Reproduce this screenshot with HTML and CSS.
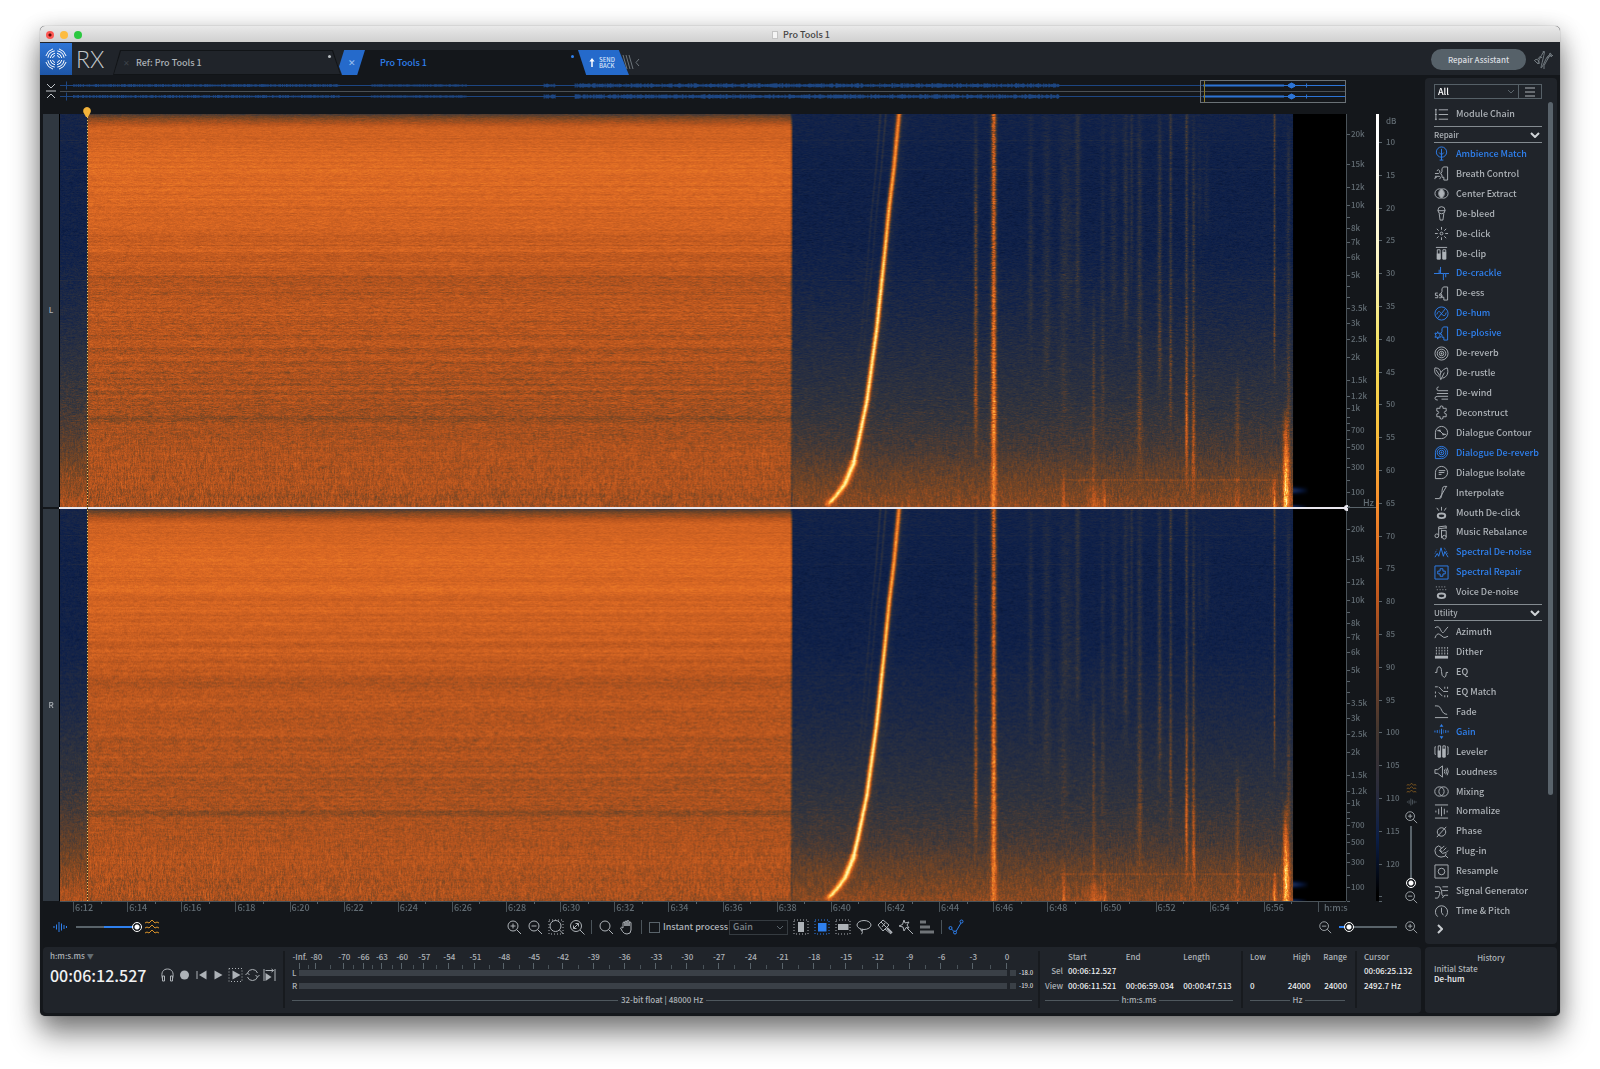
FILE: index.html
```html
<!DOCTYPE html>
<html lang="en">
<head>
<meta charset="utf-8">
<meta name="viewport" content="width=device-width, initial-scale=1">
<title>Pro Tools 1</title>
<link rel="stylesheet" href="styles.css">
</head>
<body>
<svg class="sprite" aria-hidden="true">
  <symbol id="zoom" viewBox="0 0 16 16"><circle cx="7" cy="7" r="5"/><path d="M10.600 10.600L15 15"/></symbol>
  <symbol id="zoom-in" viewBox="0 0 16 16"><circle cx="7" cy="7" r="5"/><path d="M10.600 10.600L15 15M4.500 7h5M7 4.500v5"/></symbol>
  <symbol id="zoom-out" viewBox="0 0 16 16"><circle cx="7" cy="7" r="5"/><path d="M10.600 10.600L15 15M4.500 7h5"/></symbol>
  <symbol id="wave" viewBox="0 0 16 16"><path d="M2 7v2M4.500 5.500v5M7 3v10M9.500 4.500v7M12 6v4M14.500 7v2"/></symbol>
  <symbol id="spectral" viewBox="0 0 16 16"><path d="M1 4l2-1 2 1 3-3 3 3 2-1 2 1M1 9l2-1 2 1 3-3 3 3 2-1 2 1M1 14l2-1 2 1 3-3 3 3 2-1 2 1"/></symbol>
  <symbol id="mouth" viewBox="0 0 16 16"><ellipse cx="8" cy="11.500" rx="4" ry="2.500" stroke-width="2"/></symbol>
  <symbol id="face" viewBox="0 0 16 16"><path d="M14.500 1H10L8.500 3v3L7 8.500l1.500 1V12h2v3h4z"/></symbol>
  <symbol id="bubble" viewBox="0 0 16 16"><path d="M1.500 14.500V8a6.500 6.500 0 1 1 6.500 6.500z"/></symbol>
</svg>

<main class="window">
  <header class="titlebar">
    <div class="lights"><i class="close"></i><i class="min"></i><i class="max"></i></div>
    <span class="doc"></span><span>Pro Tools 1</span>
  </header>

  <nav class="tabs">
    <span class="logo"><svg viewBox="0 0 32 32"><g id="q"><path d="M15 12.500A3.600 3.600 0 0 0 12.500 15M15 10.200A5.900 5.900 0 0 0 10.200 15M14.700 7.900A8.200 8.200 0 0 0 7.900 14.700M13 5.900A10.500 10.500 0 0 0 5.900 13"/></g><use href="#q" transform="matrix(-1 0 0 1 32 0)"/><use href="#q" transform="matrix(1 0 0 -1 0 32)"/><use href="#q" transform="rotate(180 16 16)"/></svg></span>
    <span class="product">RX</span>
    <a class="tab" href="#"><i>✕</i><span>Ref: Pro Tools 1</span><b></b></a>
    <button class="tab-close" aria-label="Close tab">✕</button>
    <a class="tab active" href="#"><span>Pro Tools 1</span><b></b></a>
    <button class="send"><svg viewBox="0 0 8 12"><path d="M4 0l3.500 4.500H5V12H3V4.500H.5z"/></svg><span>SEND<br>BACK</span></button>
    <svg class="grip" viewBox="0 0 18 16"><path d="M1 1l4 14M4 1l4 14M7 1l4 14M17 5l-3 3.500 3 3.500"/></svg>
    <button class="assistant">Repair Assistant</button>
    <svg class="izotope" viewBox="0 0 20 20"><path d="M1 11q2-3 4-1t1 4q-2 0 0-4t5-9q1 0-1 8t-2 9q1 0 4-7t6-6q-2 3-4 3M11 19q-1-3 2-7t4-9q2 0 1 4l2-2M5 9q2-4 4-1M10 1l1 2M2 11l3 3"/></svg>
  </nav>

  <div class="workspace">
    <section class="editor" aria-label="Spectrogram editor">
      <div class="overview">
        <svg class="collapse" viewBox="0 0 12 18"><path d="M2 2l4 4 4-4M1 9h10M2 16l4-4 4 4"/></svg>
        <div class="over-wave"><canvas id="overview" width="1287" height="26"></canvas><div class="viewbox"></div></div>
      </div>

      <div class="stage">
        <div class="chan">L</div>
        <canvas class="spec" width="1287" height="393"></canvas>
        <ul class="freq"></ul>
        <div class="chan second">R</div>
        <canvas class="spec second" width="1287" height="393"></canvas>
        <ul class="freq second"></ul>
        <div class="split"><i></i></div>
        <span class="hz">Hz</span>
        <div class="playhead"><svg viewBox="0 0 8 10"><path d="M4 0a4 4 0 0 1 3.500 5.500L5 10H3L.5 5.500A4 4 0 0 1 4 0z"/></svg></div>
        <div class="colorbar"></div>
        <ul class="db"></ul>
        <div class="vzoom">
          <svg class="mini gold"><use href="#spectral"/></svg>
          <svg class="mini dim"><use href="#wave"/></svg>
          <svg class="ic"><use href="#zoom-in"/></svg>
          <input type="range" class="vertical" aria-label="Vertical zoom" value="0">
          <svg class="ic"><use href="#zoom-out"/></svg>
        </div>
      </div>

      <ol class="ruler"></ol>

      <div class="toolbar">
        <div class="group">
          <svg class="ic blue"><use href="#wave"/></svg>
          <input type="range" class="blend" aria-label="Waveform and spectrogram blend" value="100">
          <svg class="ic gold bright"><use href="#spectral"/></svg>
        </div>
        <div class="group tools">
          <button aria-label="Zoom in"><svg class="ic"><use href="#zoom-in"/></svg></button>
          <button aria-label="Zoom out"><svg class="ic"><use href="#zoom-out"/></svg></button>
          <button aria-label="Zoom to selection"><svg class="ic" viewBox="0 0 16 16"><rect x="1" y="1" width="14" height="14" stroke-dasharray="1 2"/><circle cx="7.500" cy="7" r="5.500"/><path d="M11.500 11l4 4"/></svg></button>
          <button aria-label="Zoom out full"><svg class="ic" viewBox="0 0 16 16"><circle cx="7" cy="7" r="5.500"/><path d="M11 11l4.500 4.500M4.500 9.500l5-5M6.500 4.500h3v3M4.500 6.500v3h3"/></svg></button>
          <hr>
          <button aria-label="Zoom"><svg class="ic"><use href="#zoom"/></svg></button>
          <button aria-label="Grab"><svg class="ic" viewBox="0 0 16 16"><path d="M4 9V3.500q1-1 2 0V7 2.500q1-1 2 0V7 2q1-1 2 0v5-3.500q1-1 2 0V11q0 4-4 4-3 0-4.500-2.500L1.500 9q.5-1.500 2.500 0z"/></svg></button>
          <hr>
          <label class="instant"><input type="checkbox">Instant process</label>
          <select aria-label="Instant process module"><option>Gain</option></select>
          <button aria-label="Time selection"><svg class="ic" viewBox="0 0 16 16"><rect x="1" y="1" width="14" height="14" stroke-dasharray="1 2"/><path class="solid" d="M5 3h6v10H5z"/></svg></button>
          <button aria-label="Time-frequency selection"><svg class="ic blue" viewBox="0 0 16 16"><rect x="1" y="1" width="14" height="14" stroke-dasharray="1 2"/><path class="solid" d="M4 4h8.500v8.500H4z"/></svg></button>
          <button aria-label="Frequency selection"><svg class="ic" viewBox="0 0 16 16"><rect x="1" y="1" width="14" height="14" stroke-dasharray="1 2"/><path class="solid" d="M3 5h10.500v6H3z"/></svg></button>
          <button aria-label="Lasso"><svg class="ic" viewBox="0 0 16 16"><ellipse cx="8" cy="6" rx="7" ry="4.500"/><path d="M5 10c-1 2 1 2 2 1s-2-1-1 1 0 3-1 3"/></svg></button>
          <button aria-label="Brush"><svg class="ic" viewBox="0 0 16 16"><path d="M1 6l5-5 6 5-6 6zM4 3l6 6M6 12l2-2 6 5M8 4l-3 4"/><path d="M10 9l5 5" stroke-width="2"/></svg></button>
          <button aria-label="Magic wand"><svg class="ic" viewBox="0 0 16 16"><path d="M6 1l1 3 4-1-2 3 2 3-3-.5L6 12l-1-4-4-1 3.500-1.500zM9 9l6 6"/></svg></button>
          <button aria-label="Find similar"><svg class="ic" viewBox="0 0 16 16"><path d="M1 3h6M1 8h10M1 13h14" stroke-width="3" opacity=".6"/></svg></button>
          <hr>
          <button aria-label="Clip gain"><svg class="ic blue" viewBox="0 0 16 16"><circle cx="2.500" cy="9" r="1.500"/><circle cx="7" cy="13.500" r="1.500"/><circle cx="13.500" cy="2.500" r="1.500"/><path d="M3.500 10l2.500 2.500M8 12.500l5-8.500"/></svg></button>
        </div>
        <div class="group end">
          <svg class="ic"><use href="#zoom-out"/></svg>
          <input type="range" class="hzoom" aria-label="Horizontal zoom" value="10">
          <svg class="ic"><use href="#zoom-in"/></svg>
        </div>
      </div>
    </section>

    <aside class="panel modules">
      <div class="filter">
        <select aria-label="Module filter"><option>All</option></select>
        <button aria-label="Module menu"><svg viewBox="0 0 12 10"><path d="M1 1h10M1 5h10M1 9h10"/></svg></button>
      </div>
      <button class="mod chain"><svg viewBox="0 0 16 16"><path d="M5 3h10M5 8h10M5 13h10M2 2v12M1 3h2M1 8h2M1 13h2"/></svg>Module Chain</button>
      <h2>Repair<svg viewBox="0 0 10 6"><path d="M1 1l4 4 4-4"/></svg></h2>
      <div class="list repair">
        <button class="mod on"><svg viewBox="0 0 16 16"><circle cx="8" cy="6.500" r="5.500"/><path d="M8 3v12M5.500 7L8 9.500 10.500 7M6 15h4"/></svg>Ambience Match</button>
        <button class="mod"><svg viewBox="0 0 16 16"><use href="#face"/><path d="M1 8h4q2-1 1-3T3 5M1 11h5q2 1 0 3M1 14q-1-2 2-2"/></svg>Breath Control</button>
        <button class="mod"><svg viewBox="0 0 16 16"><circle cx="6" cy="8" r="5"/><circle cx="10" cy="8" r="5"/><path class="solid" d="M8 3.500a5 5 0 0 1 0 9 5 5 0 0 1 0-9"/></svg>Center Extract</button>
        <button class="mod"><svg viewBox="0 0 16 16"><circle cx="8" cy="4.500" r="3.800"/><path d="M4 5h8M5.500 8l1 7h3l1-7"/></svg>De-bleed</button>
        <button class="mod"><svg viewBox="0 0 16 16"><circle cx="8" cy="8" r="1.500"/><path d="M8 1v3M8 12v3M1 8h3M12 8h3M3 3l2 2M11 11l2 2M13 3l-2 2M5 11l-2 2"/></svg>De-click</button>
        <button class="mod"><svg viewBox="0 0 16 16"><path d="M2 1.500h12M3.500 4h3v10h-3zM9.500 4h3v10h-3z"/><path class="solid" d="M3 8h4v6H3zM9 6h4v8H9z"/></svg>De-clip</button>
        <button class="mod on"><svg viewBox="0 0 16 16"><path d="M0 8h5.500V4M5.500 8h1.500V1M7 8h3v7M10 8h2.500v4M12.500 8H16"/></svg>De-crackle</button>
        <button class="mod"><svg viewBox="0 0 16 16"><use href="#face"/><path d="M4 7.500H1.500V10H4v2.500H1M8 8.500H6v2h2v2H5.500"/></svg>De-ess</button>
        <button class="mod on"><svg viewBox="0 0 16 16"><circle cx="8" cy="8" r="7"/><path d="M4 13L12 3M3 9q1.500-5 4-2l2 2.500Q12 12 13 7"/></svg>De-hum</button>
        <button class="mod on"><svg viewBox="0 0 16 16"><use href="#face"/><path d="M4 6l.7 2L7 7.500 6 10l1 2-2.300-.3L4 14l-.7-2.300L1 12l1-2-1-2.500 2.300.5z"/></svg>De-plosive</button>
        <button class="mod"><svg viewBox="0 0 16 16"><circle cx="8" cy="8" r="7"/><circle cx="8" cy="8" r="4.600"/><circle cx="8" cy="8" r="2.400"/><circle class="solid" cx="8" cy="8" r="1"/></svg>De-reverb</button>
        <button class="mod"><svg viewBox="0 0 16 16"><path d="M7 14C5 9 8 4 14 2c2 5 0 10-5 11M7 15l4-8M5 11C1 9 0 6 1 2c4 0 6 2 6 5M2 4l4 6"/></svg>De-rustle</button>
        <button class="mod"><svg viewBox="0 0 16 16"><path d="M15 5H5Q3 5 3 3t2-2M15 8H3M15 11H4q-3 0-3 2t3 2M15 14H8"/></svg>De-wind</button>
        <button class="mod"><svg viewBox="0 0 16 16"><path d="M3 3.500h3.500Q5.500 1 8 1t1.500 2.500H13V6.500q-2 0-2 1.500t2 1.500v3H9.500Q10.500 15 8 15t-1.500-2.500H3v-3Q5 9.500 5 8T3 6.500z"/></svg>Deconstruct</button>
        <button class="mod"><svg viewBox="0 0 16 16"><use href="#bubble"/><path d="M3.500 6h2.500l4 4h3"/><path class="solid" d="M5 5h2v2H5zM9 9h2v2H9z"/></svg>Dialogue Contour</button>
        <button class="mod on"><svg viewBox="0 0 16 16"><use href="#bubble"/><circle cx="8" cy="8" r="4.600"/><circle cx="8" cy="8" r="2.500"/><circle class="solid" cx="8" cy="8" r="1"/></svg>Dialogue De-reverb</button>
        <button class="mod"><svg viewBox="0 0 16 16"><use href="#bubble"/><path d="M5 6h7M5 8h6M5 10h3"/></svg>Dialogue Isolate</button>
        <button class="mod"><svg viewBox="0 0 16 16"><path d="M1 14.500h5c4 0 1-13 5-13h3M6 14L13 2"/></svg>Interpolate</button>
        <button class="mod"><svg viewBox="0 0 16 16"><use href="#mouth"/><path d="M3 3l2 3M8 2v4M13 3l-2 3"/></svg>Mouth De-click</button>
        <button class="mod"><svg viewBox="0 0 16 16"><circle cx="3" cy="11.500" r="2"/><path d="M5 11V2l8-1v3M5 4l8-1M8 5v9M8 6h5v7"/><circle cx="11" cy="13" r="2"/></svg>Music Rebalance</button>
        <button class="mod on"><svg viewBox="0 0 16 16"><path d="M1 13l2.500-4L5 12 7.500 3l2.500 9 1.500-5L15 13"/><path d="M1 9l2-4M11 3l4 7" stroke-dasharray="1 1"/></svg>Spectral De-noise</button>
        <button class="mod on"><svg viewBox="0 0 16 16"><path d="M1 1h14v14H1zM6.500 4h3v2.500H12v3H9.500V12h-3V9.500H4v-3h2.500z"/></svg>Spectral Repair</button>
        <button class="mod"><svg viewBox="0 0 16 16"><use href="#mouth"/><path d="M2 2h12M3 5h10" stroke-dasharray="1 2"/></svg>Voice De-noise</button>
      </div>
      <h2>Utility<svg viewBox="0 0 10 6"><path d="M1 1l4 4 4-4"/></svg></h2>
      <div class="list utility">
        <button class="mod"><svg viewBox="0 0 16 16"><path d="M1 3q4-3 6 2t4 2 4-5M1 14q2-6 5-4t4 3 5-1"/></svg>Azimuth</button>
        <button class="mod"><svg viewBox="0 0 16 16"><path d="M2 3h13M2 6h13M2 9h13" stroke-width="2" stroke-dasharray="1 2"/><path class="solid" d="M1 11.500h14v3H1z"/></svg>Dither</button>
        <button class="mod"><svg viewBox="0 0 16 16"><path d="M1 9h2q0-6 2.500-6T8 8t2.500 6T13 9h2"/></svg>EQ</button>
        <button class="mod"><svg viewBox="0 0 16 16"><path d="M1 3h3M5 3l5 5h5M5 9l4 4"/><path d="M1 9h3M11 13h4M11 4h4M1 13h3" stroke-width="2" stroke-dasharray="1 2"/></svg>EQ Match</button>
        <button class="mod"><svg viewBox="0 0 16 16"><path d="M1 2h2c6 0 4 9 11 9M1 14.500h14"/></svg>Fade</button>
        <button class="mod on"><svg viewBox="0 0 16 16"><path d="M1 7v2M3.500 6.500v3M8 5v6M12.500 6.500v3M15 7v2"/><path d="M6 6v4M10 6v4" opacity=".6"/><path class="solid" d="M8 0l2 3H6zM8 16l2-3H6z"/></svg>Gain</button>
        <button class="mod"><svg viewBox="0 0 16 16"><path d="M4.500 2h2.500v12H4.500zM9.500 2H12v12H9.500zM2 3H1v8h1M14 3h1v8h-1"/><path class="solid" d="M4 7h3v7H4zM9 5h3v9H9z"/></svg>Leveler</button>
        <button class="mod"><svg viewBox="0 0 16 16"><path d="M1 6h3l5-4v12l-5-4H1zM11 6q1 2 0 4M12.500 5q2 3 0 6M14 4q2.500 4 0 8"/></svg>Loudness</button>
        <button class="mod"><svg viewBox="0 0 16 16"><circle cx="5.800" cy="8" r="5"/><circle cx="10.200" cy="8" r="5"/></svg>Mixing</button>
        <button class="mod"><svg viewBox="0 0 16 16"><path d="M1 1h14M1 15h14M2 7v2M5 5v6M8 3v10M11 5v6M14 7v2"/></svg>Normalize</button>
        <button class="mod"><svg viewBox="0 0 16 16"><circle cx="8" cy="8.500" r="4.500"/><path d="M3 14L13 3"/></svg>Phase</button>
        <button class="mod"><svg viewBox="0 0 16 16"><path d="M8 4L5 2Q1 3 1 7t3 6 8 0l1-3M8 4L6 7l3 3 4-1 2-2M8 5l3-3M10 7l3-3M6 7l3 1M12 12l3 3"/></svg>Plug-in</button>
        <button class="mod"><svg viewBox="0 0 16 16"><path d="M1 1h14v14H1z"/><circle cx="8" cy="8" r="3.500"/></svg>Resample</button>
        <button class="mod"><svg viewBox="0 0 16 16"><path d="M1 3h4q2 0 2 2t2 2h6M1 8h4q2 0 1 3t-2 4H1M9 3h6M15 12h-3q-2 0-3 3M8 7q0 6 2 6"/></svg>Signal Generator</button>
        <button class="mod"><svg viewBox="0 0 16 16"><path d="M4 13.500a6.500 6.500 0 1 1 8 0M8 4v5l2 3"/></svg>Time &amp; Pitch</button>
      </div>
      <button class="more" aria-label="Show more"><svg viewBox="0 0 6 10"><path d="M1 1l4 4-4 4"/></svg></button>
      <i class="scroll"></i>
    </aside>

    <footer class="panel info">
      <section class="timer">
        <button class="format">h:m:s.ms <span>▼</span></button>
        <div class="clock-row">
          <strong>00:06:12.527</strong>
          <div class="transport">
            <button aria-label="Monitor"><svg viewBox="0 0 14 16"><path d="M2 12C0 5 3 2 7 2s7 3 5 10M2 9v5h2V9zM10 9v5h2V9z"/></svg></button>
            <button aria-label="Record"><svg viewBox="0 0 14 16"><circle class="solid" cx="7" cy="8" r="4.500"/></svg></button>
            <button aria-label="Rewind"><svg viewBox="0 0 14 16"><path d="M2.500 4v8"/><path class="solid" d="M12 3.500v9L4.500 8z"/></svg></button>
            <button aria-label="Play"><svg viewBox="0 0 14 16"><path class="solid" d="M3 3.500v9L11 8z"/></svg></button>
            <button aria-label="Play selection"><svg viewBox="0 0 14 16"><rect x=".5" y="1.500" width="13" height="13" stroke-dasharray="1 2"/><path class="solid" d="M4 3.500v9L12 8z"/></svg></button>
            <button aria-label="Loop"><svg viewBox="0 0 14 16"><path d="M2 6a5.300 5.300 0 0 1 10 0M12 10a5.300 5.300 0 0 1-10 0M0 8l2-2 2 2M10 8l2 2 2-2"/></svg></button>
            <button aria-label="Follow playhead"><svg viewBox="0 0 14 16"><path d="M1.500 2v12M12.500 2v12M3 3.500h8M9 2l2 1.500L9 5"/><path class="solid" d="M3 6v8l6-4z"/></svg></button>
          </div>
        </div>
      </section>
      <section class="meter">
        <ol class="scale"></ol>
        <div class="bar"><span>L</span><i></i><b></b><em>-18.0</em></div>
        <div class="bar"><span>R</span><i></i><b></b><em>-19.0</em></div>
        <p class="legend">32-bit float | 48000 Hz</p>
      </section>
      <section class="selection">
        <table>
          <thead><tr><td></td><th>Start</th><th>End</th><th>Length</th></tr></thead>
          <tbody>
            <tr><th>Sel</th><td>00:06:12.527</td><td></td><td></td></tr>
            <tr><th>View</th><td>00:06:11.521</td><td>00:06:59.034</td><td>00:00:47.513</td></tr>
          </tbody>
        </table>
        <p class="legend">h:m:s.ms</p>
      </section>
      <section class="range">
        <table>
          <thead><tr><th>Low</th><th>High</th><th>Range</th></tr></thead>
          <tbody><tr><td></td><td></td><td></td></tr><tr><td>0</td><td>24000</td><td>24000</td></tr></tbody>
        </table>
        <p class="legend">Hz</p>
      </section>
      <section class="cursor">
        <table>
          <thead><tr><th>Cursor</th></tr></thead>
          <tbody><tr><td>00:06:25.132</td></tr><tr><td>2492.7 Hz</td></tr></tbody>
        </table>
      </section>
    </footer>

    <section class="panel history">
      <h3>History</h3>
      <p>Initial State</p>
      <p class="current">De-hum</p>
    </section>
  </div>
</main>
<script src="app.js"></script>
</body>
</html>
```
FILE: styles.css
```css
* { box-sizing: border-box; }

:root {
  --bg: #14171b;
  --panel: #20242a;
  --line: #59636a;
  --dim: #626c73;
  --text: #adb2b7;
  --light: #eceeef;
  --blue: #2f80ee;
  --gold: #d8922a;
}

body {
  margin: 0;
  padding: 26px 40px 53px;
  min-height: 100vh;
  display: flex;
  background: #fff;
  color: var(--text);
  font: 500 9px/14px "Noto Sans CJK SC", "Noto Sans", sans-serif;
}

ul, ol, p, h2, h3 { margin: 0; padding: 0; list-style: none; font-size: 8px; font-weight: 500; }
button, select, input { font: inherit; color: inherit; margin: 0; }
button { padding: 0; border: 0; background: none; cursor: pointer; }
a { color: inherit; text-decoration: none; }
svg { display: block; fill: none; stroke: currentColor; stroke-width: 1; flex: none; }
.solid { fill: currentColor; stroke: none; }
.sprite { position: absolute; width: 0; height: 0; }
.ic { width: 16px; height: 16px; }
.blue { color: var(--blue); }
.gold { color: #a06c22; }
.gold.bright { color: var(--gold); }
.dim { color: var(--dim); }

.window {
  flex: 1;
  min-width: 0;
  display: flex;
  flex-direction: column;
  border-radius: 5px;
  background: var(--bg);
  box-shadow: 0 0 1px #0008, 0 18px 30px #0007, 0 4px 22px #0003;
}

/* title bar */
.titlebar {
  position: relative;
  height: 16px;
  display: flex;
  align-items: center;
  justify-content: center;
  gap: 5px;
  padding: 2px 0 0 2px;
  border-radius: 5px 5px 0 0;
  background: linear-gradient(#e9e9e9, #d0d0d0);
  color: #444;
}
.doc { width: 6px; height: 8px; background: #f5f5f5; border: 1px solid #c4c4c4; }
.lights { position: absolute; left: 6px; top: 5px; display: flex; gap: 6px; }
.lights i { width: 8px; height: 8px; border-radius: 50%; background: #fdbc40; }
.lights .close { background: radial-gradient(#5b0c08 1px, #fc5753 2px); }
.lights .max { background: #2bc840; }

/* document tabs */
.tabs {
  height: 33px;
  display: flex;
  align-items: flex-end;
  background: var(--panel);
}
.logo { width: 32px; height: 32px; background: linear-gradient(#2e75d6, #1d55a6); color: #fff; }
.product { width: 41px; padding-left: 4px; font: 300 23px/31px Lato, sans-serif; color: #c3c7ca; }
.tab {
  position: relative;
  width: 228px;
  height: 25px;
  display: flex;
  align-items: center;
  gap: 6px;
  padding-left: 10px;
  background: #111417;
  clip-path: polygon(7px 0, 220px 0, 100% 100%, 0 100%);
}
.tab:not(.active)::before {
  content: "";
  position: absolute;
  inset: 1px;
  background: #20242a;
  clip-path: polygon(7px 0, 218px 0, 100% 100%, 0 100%);
}
.tab > * { position: relative; }
.tab i { font-style: normal; font-size: 8px; color: #3c4248; }
.tab b { position: absolute; right: 10px; top: 5px; width: 3px; height: 3px; border-radius: 50%; background: #b8bdc1; }
.tab.active {
  width: 231px;
  padding-left: 24px;
  color: var(--blue);
  background: var(--bg);
  clip-path: none;
}
.tab.active b { right: 13px; background: var(--blue); }
.tab-close {
  z-index: 1;
  width: 26px;
  height: 25px;
  margin-left: -2px;
  background: #256acb;
  color: #9cc0f0;
  clip-path: polygon(20% 0, 100% 0, 70% 100%, 12% 100%, 0 66%);
}
.tab-close + .tab { margin-left: -9px; z-index: 0; }
.send {
  width: 51px;
  height: 25px;
  margin-left: -9px;
  z-index: 1;
  display: flex;
  align-items: center;
  gap: 4px;
  padding-left: 11px;
  background: #256acb;
  color: #dce8fa;
  font-size: 6px;
  line-height: 6px;
  text-align: left;
  clip-path: polygon(0 0, 80% 0, 100% 100%, 16% 100%);
}
.send svg { width: 6px; height: 11px; fill: #fff; stroke: none; }
.grip { width: 18px; height: 16px; margin: 0 auto 5px -7px; color: #6d757b; z-index: 2; }
.assistant {
  width: 95px;
  height: 21px;
  margin-bottom: 5px;
  border-radius: 11px;
  background: #566169;
  color: #dadde0;
  font-size: 8px;
}
.izotope { width: 20px; height: 20px; margin: 0 7px 5px; color: #727a80; }

/* main grid */
.workspace {
  flex: 1;
  display: grid;
  grid-template-columns: minmax(0, 1fr) 132px;
  grid-template-rows: 1fr auto;
  gap: 3px 4px;
  padding: 0 3px 3px;
}
.panel { border-radius: 4px; background: var(--panel); }
.editor { display: flex; flex-direction: column; min-width: 0; }

.overview { height: 39px; display: flex; padding-top: 4px; }
.collapse { width: 12px; height: 18px; margin: 3px 3px 0 2px; color: #c0c5c9; }
.over-wave { position: relative; flex: 1; height: 26px; margin-right: 75px; }
.over-wave canvas { width: 100%; height: 100%; display: block; }
.viewbox { position: absolute; top: 1px; right: 0; width: 146px; height: 23px; border: 1px solid #6a7176; }
.viewbox::before { content: ""; position: absolute; left: 3px; top: 0; bottom: 0; border-left: 1px solid #8a7a2c; }

.stage {
  flex: 1;
  position: relative;
  display: grid;
  grid-template-columns: 16px minmax(0, 1fr) 30px 3px 22px 20px;
  grid-template-rows: minmax(0, 1fr) 2px minmax(0, 1fr);
}
.stage > .second { grid-row: 3; }
.chan { grid-column: 1; grid-row: 1; display: grid; place-items: center; background: #303841; font-size: 8px; }
.spec { grid-column: 2; grid-row: 1; width: 100%; height: 0; min-height: 100%; padding-left: 1px; display: block; background: #000; }
.freq { grid-column: 3; grid-row: 1; border-left: 1px solid #4a5359; }
.freq, .db { display: flex; flex-direction: column; color: var(--dim); min-height: 0; font-size: 8px; }
.freq li, .db li { display: flex; gap: 1px; height: 0; flex-basis: 0; line-height: 0; white-space: nowrap; }
.freq li::before, .db li::before { content: ""; width: 3px; height: 1px; background: #59636a; }
.freq li:first-child::before, .db li:first-child::before, .db .unit::before { visibility: hidden; }
.db li { gap: 4px; }
.split { grid-column: 2 / 4; grid-row: 2; background: #e8e6ee; margin-right: 29px; position: relative; }
.split::after { content: ""; position: absolute; left: 100%; top: 0; width: 29px; height: 1px; background: #59636a; }
.split i { position: absolute; right: -1px; top: -2px; width: 4px; height: 6px; border-radius: 4px 0 0 4px; background: #e8e6ee; }
.hz { grid-column: 3; grid-row: 1; align-self: end; justify-self: end; margin-right: 2px; line-height: 8px; color: var(--dim); }
.playhead { grid-column: 2; grid-row: 1 / 4; position: relative; width: 1px; margin-left: 28px; background: repeating-linear-gradient(#e9c46a 0 1px, #4a3820 1px 3px); }
.playhead svg { position: absolute; left: -4px; top: -7px; width: 8px; height: 10px; fill: #f2b23a; stroke: none; }
.colorbar {
  grid-column: 4;
  grid-row: 1 / 4;
  background: linear-gradient(#fff 0 5%, #fdf7c8 18%, #f3e15c 30%, #fac13c 40%, #f88a2a 50%, #c95b1c 60%, #7d4226 70%, #45372f 78%, #2a2c3c 86%, #0b1e47 92%, #000 99%);
}
.db { grid-column: 5; grid-row: 1 / 4; }
.vzoom { grid-column: 6; grid-row: 1 / 4; display: flex; flex-direction: column; align-items: center; justify-content: flex-end; gap: 2px; margin-bottom: -3px; }
.mini { width: 11px; height: 12px; }
.vzoom .ic { width: 14px; height: 14px; }

/* range sliders */
input[type="range"] {
  -webkit-appearance: none;
  appearance: none;
  height: 12px;
  background: linear-gradient(var(--line), var(--line)) center / 100% 2px no-repeat;
}
input[type="range"]::-webkit-slider-thumb {
  -webkit-appearance: none;
  width: 10px;
  height: 10px;
  border: 1px solid #fff;
  border-radius: 50%;
  background: radial-gradient(#fff 2px, #14171b 3px);
}
input.blend { width: 66px; margin: 0 -3px 0 3px; background-image: linear-gradient(90deg, var(--line) 42%, var(--blue) 42%); }
input.hzoom { width: 58px; background-image: linear-gradient(90deg, var(--blue) 10%, var(--line) 10%); }
input.vertical {
  writing-mode: vertical-lr;
  direction: rtl;
  width: 12px;
  height: 62px;
  background-size: 2px 100%;
}

/* time ruler */
.ruler {
  height: 14px;
  display: grid;
  grid-template-columns: 13fr repeat(23, 54fr) 28fr;
  margin: 0 75px 0 17px;
  border-top: 1px solid #4a5359;
  color: var(--dim);
  font-size: 9px;
}
.ruler li { position: relative; padding-left: 1px; min-width: 0; line-height: 12px; border-left: 1px solid #4a5359; height: 10px; }
.ruler li:first-child { border: 0; }
.ruler li:nth-child(n+2)::after { content: ""; position: absolute; left: 50%; top: 0; width: 1px; height: 2px; background: #59636a; }
.ruler li:last-child::after { display: none; }
.ruler li:last-child { padding-left: 5px; white-space: nowrap; }

/* toolbar */
.toolbar {
  height: 29px;
  display: grid;
  grid-template-columns: 1fr auto 1fr;
  align-items: center;
  padding-bottom: 5px;
}
.group { display: flex; align-items: center; gap: 5px; padding-left: 9px; }
.group.end { justify-content: flex-end; gap: 7px; padding: 0 3px 0 0; }
.group.end .ic { width: 14px; height: 14px; }
.tools { padding-left: 6px; }
.tools hr { width: 1px; height: 14px; margin: 0 1px; border: 0; background: #4a5359; }
.instant { display: flex; align-items: center; gap: 3px; padding-left: 1px; white-space: nowrap; }
.instant input { -webkit-appearance: none; appearance: none; width: 11px; height: 11px; border: 1px solid #59636a; }
select {
  -webkit-appearance: none;
  appearance: none;
  padding: 0 3px;
  border: 1px solid #353b40;
  border-radius: 0;
  background: url("data:image/svg+xml,%3Csvg xmlns='http://www.w3.org/2000/svg' width='8' height='5'%3E%3Cpath d='M1 1l3 3 3-3' fill='none' stroke='%2359636a'/%3E%3C/svg%3E") right 3px center no-repeat;
  color: #7c848a;
}
.tools select { width: 59px; height: 15px; line-height: 12px; margin-left: -4px; }

/* module panel */
.modules { position: relative; margin-top: 3px; padding: 6px 15px 7px 9px; display: flex; flex-direction: column; }
.filter { display: flex; height: 15px; margin-bottom: 5px; }
.filter select { flex: 1; color: #fff; border-color: #566067; line-height: 12px; }
.filter button { width: 23px; border: 1px solid #566067; border-left: 0; display: grid; place-items: center; }
.filter svg { width: 12px; height: 10px; }
.mod { flex: 1; min-height: 19px; display: flex; align-items: center; gap: 7px; text-align: left; white-space: nowrap; }
.mod.chain { flex: 0 0 20px; }
.mod svg { width: 15px; height: 15px; }
.mod.on { color: var(--blue); }
.modules h2 {
  flex: none;
  height: 17px;
  margin: 2px 0 1px;
  display: flex;
  align-items: center;
  justify-content: space-between;
  padding-right: 2px;
  border: 1px solid #848b90;
  border-width: 1px 0;
  line-height: 13px;
}
.modules h2 svg { width: 10px; height: 6px; color: #d0d4d7; stroke-width: 2; }
.list { display: flex; flex-direction: column; }
.repair { flex: 23; }
.utility { flex: 15; }
.more { flex: none; width: 12px; height: 16px; display: grid; place-items: center; color: #c8ccd0; }
.more svg { width: 6px; height: 10px; stroke-width: 2; }
.scroll { position: absolute; top: 24px; right: 4px; width: 5px; height: 80%; border-radius: 3px; background: #59636b; }

/* info bar */
.info { height: 66px; display: flex; padding: 4px 0 5px; font-size: 8px; }
.info > section { border-right: 2px solid #171a1e; }
.info > .cursor { border: 0; }
.timer { width: 242px; padding: 0 7px; }
.format { display: block; height: 10px; line-height: 10px; }
.format span { font-size: 7px; color: var(--dim); }
.clock-row { display: flex; align-items: center; gap: 14px; margin-top: 2px; }
.clock-row strong { font-size: 16px; line-height: 24px; font-weight: 500; color: #f0f1f2; }
.transport { display: flex; gap: 2px; }
.transport svg { width: 15px; height: 16px; }

.meter { flex: 1; min-width: 0; padding: 0 6px 0 7px; }
.scale { display: flex; height: 18px; margin: 0 25px 0 7px; }
.scale li { position: relative; width: 0; flex-basis: 0; border-left: 1px solid transparent; line-height: 12px; }
.scale li::before { content: ""; position: absolute; left: -1px; bottom: 0; width: 1px; height: 6px; background: #59636a; }
.scale li:not(:last-child)::after { content: ""; position: absolute; left: 50%; bottom: 0; width: 1px; height: 4px; background: #4a5359; }
.scale span { display: inline-block; transform: translateX(-50%); white-space: nowrap; }
.bar { display: flex; align-items: center; height: 7px; margin-bottom: 6px; line-height: 7px; }
.bar span { width: 7px; }
.bar i { flex: 1; height: 6px; background: #3a4047; }
.bar b { width: 6px; height: 6px; margin-left: 3px; background: #3a4047; }
.bar em { width: 16px; padding-left: 3px; font-style: normal; font-size: 6px; color: #d6d9db; white-space: nowrap; }
.legend { display: flex; align-items: center; gap: 3px; height: 10px; line-height: 10px; white-space: nowrap; }
.legend::before, .legend::after { content: ""; flex: 1; height: 1px; background: #4f585e; }

.info table { border-collapse: collapse; table-layout: fixed; font-size: 8px; line-height: 15px; white-space: nowrap; }
.info th { font-weight: 500; text-align: left; padding: 0; }
.info td { padding: 0; color: var(--light); height: 15px; }
.info thead tr, .info thead th { height: 12px; line-height: 12px; }
.info thead td { height: 12px; }
.selection { width: 203px; padding: 0 8px 0 5px; }
.selection table { width: 196px; }
.selection tr > :first-child { width: 23px; padding-right: 5px; text-align: right; }
.range { width: 114px; padding: 0 10px 0 7px; }
.range table { width: 97px; }
.range th, .range td { text-align: right; }
.range tr > :first-child { width: 24px; text-align: left; }
.cursor { width: 64px; padding-left: 7px; }
.info .legend { margin-top: 2px; }

.history { padding: 4px 9px; }
.history h3 { text-align: center; line-height: 13px; }
.history p { line-height: 10px; }
.history .current { color: #f0f1f2; }
```
FILE: app.js
```js
// Scales: each entry is [position in pixels of the nominal height or width, label]
const FREQ = [[0, ''], [20, '20k'], [50, '15k'], [73, '12k'], [91, '10k'], [103, ''], [114, '8k'], [128, '7k'],
  [143, '6k'], [161, '5k'], [172, ''], [183, ''], [194, '3.5k'], [209, '3k'], [225, '2.5k'], [243, '2k'],
  [266, '1.5k'], [282, '1.2k'], [294, '1k'], [303, ''], [309, ''], [316, '700'], [325, ''], [333, '500'], [344, ''],
  [353, '300'], [366, ''], [378, '100'], [392, '']];
const METER = [[298, '-Inf.'], [314, '-80'], [342, '-70'], [361, '-66'], [379, '-63'], [399, '-60'], [421, '-57'],
  [446, '-54'], [472, '-51'], [501, '-48'], [531, '-45'], [560, '-42'], [591, '-39'], [622, '-36'], [654, '-33'],
  [685, '-30'], [717, '-27'], [749, '-24'], [781, '-21'], [813, '-18'], [845, '-15'], [877, '-12'], [909, '-9'],
  [941, '-6'], [973, '-3'], [1007, '0']];
const DB = [[0, ''], [7, 'dB', 'unit'], [28, '10']];
for (let v = 15; v <= 120; v += 5) DB.push([28 + (v - 10) * 6.56, String(v)]);
DB.push([782, '']);
DB.push([787, '']);

function fillScale(list, marks) {
  marks.forEach(([pos, label, kind], i) => {
    const li = document.createElement('li');
    const next = marks[i + 1];
    li.style.flexGrow = next ? next[0] - pos : 0;
    if (kind) li.className = kind;
    const span = document.createElement('span');
    span.textContent = label;
    li.append(span);
    list.append(li);
  });
}
document.querySelectorAll('.freq').forEach(el => fillScale(el, FREQ));
fillScale(document.querySelector('.db'), DB);
fillScale(document.querySelector('.scale'), METER);

const ruler = document.querySelector('.ruler');
for (let i = 0; i < 25; i++) {
  const li = document.createElement('li');
  const s = 10 + i * 2;
  if (i > 0 && s < 58) li.textContent = '6:' + s;
  if (i === 24) li.textContent = 'h:m:s';
  ruler.append(li);
}

// Small repeatable random source
let seed = 7;
function rnd() {
  seed = (seed * 1664525 + 1013904223) >>> 0;
  return seed / 4294967296;
}
const noise = () => rnd() + rnd() - 1;

// Level to colour
const STOPS = [[0, 0, 0, 0], [.1, 5, 16, 42], [.2, 14, 32, 74], [.35, 52, 53, 60], [.48, 120, 70, 36],
  [.58, 182, 84, 30], [.68, 222, 106, 36], [.78, 250, 140, 42], [.9, 255, 214, 90], [1, 255, 246, 180]];
function colour(v) {
  v = Math.max(0, Math.min(.999, v));
  let i = 1;
  while (STOPS[i][0] < v) i++;
  const a = STOPS[i - 1], b = STOPS[i], t = (v - a[0]) / (b[0] - a[0]);
  return [1, 2, 3].map(k => a[k] + (b[k] - a[k]) * t);
}
function lerp(points, t) {
  let i = 1;
  while (i < points.length - 1 && points[i][0] < t) i++;
  const a = points[i - 1], b = points[i];
  return a[1] + (b[1] - a[1]) * Math.max(0, Math.min(1, (t - a[0]) / (b[0] - a[0])));
}

const SWEEP = [[0, 839], [53, 834], [95, 829], [136, 825], [213, 817], [286, 807], [329, 798], [350, 793], [369, 785], [380, 777], [390, 768]];
const QUIET = [[0, .22], [60, .2], [130, .205], [210, .26], [290, .335], [335, .39], [360, .445], [393, .51]];
const LOUD = [[0, .4], [4, .5], [14, .64], [50, .675], [110, .645], [170, .6], [230, .58], [300, .55], [350, .575], [393, .55]];
// Vertical hits: x, top, bottom, strength, half width
const HITS = [[916, 40, 320, .22, 2], [934, 0, 393, .42, 2.6], [971, 10, 220, .08, 2.5], [987, 10, 260, .07, 4],
  [1004, 20, 300, .05, 4], [1018, 0, 200, .1, 2.5], [1009, 40, 190, .06, 7], [1034, 190, 393, .1, 1.5], [1043, 30, 300, .07, 2],
  [1054, 20, 200, .07, 3], [1066, 10, 220, .11, 2.5], [1072, 0, 160, .09, 1.5], [1080, 10, 350, .11, 2.5],
  [1100, 10, 260, .14, 2], [1111, 0, 300, .14, 1.5], [1127, 0, 356, .15, 1.6], [1134, 30, 365, .14, 1.6],
  [1140, 50, 110, .07, 2], [1147, 60, 100, .09, 2.5], [1178, 260, 393, .09, 2], [1215, 0, 250, .18, 1.2], [1229, 20, 393, .09, 2],
  [1004, 370, 393, .3, 1.5], [1045, 375, 393, .3, 1.2], [1036, 390, 393, .3, 7], [1215, 375, 393, .5, 1.5],
  [1226, 310, 393, .34, 2.4], [1227, 350, 393, .3, 3], [1127, 260, 356, .14, 1.4], [1134, 335, 365, .18, 1.8]];

function drawSpectrogram(canvas) {
  const W = canvas.width, H = canvas.height, ctx = canvas.getContext('2d');
  const img = ctx.createImageData(W, H);
  const columns = Array.from({ length: W }, noise);
  let row = 0;
  for (let y = 0; y < H; y++) {
    const quiet = lerp(QUIET, y), loud = lerp(LOUD, y), sweep = lerp(SWEEP, y);
    row = row * .4 + noise() * .9;
    const band = row * lerp([[0, .008], [30, .025], [80, .04], [280, .032], [330, .02], [393, .015]], y)
      - (Math.abs(y - 305) < 4 ? .03 : 0) - (Math.abs(y - 170) < 12 ? .015 : 0);
    const grain = lerp([[0, .035], [100, .05], [200, .075], [320, .09], [393, .09]], y);
    const tall = lerp([[0, 0], [300, .2], [340, .6], [393, .9]], y);
    let drift = 0;
    for (let x = 0; x < W; x++) {
      drift = drift * .5 + noise() * .8;
      columns[x] = columns[x] * .6 + noise() * .7;
      const n = drift * (1 - tall) + columns[x] * tall * 1.2;
      let v;
      if (x >= 1234) {
        v = Math.max(0, .26 - (x - 1234) / 60) * Math.exp(-((y - 376) ** 2) / 9);
        v += Math.max(0, .2 - (x - 1234) / 70) * Math.exp(-((y - 392) ** 2) / 3);
      } else if (x >= 27 && x < 733) {
        v = loud + band + n * grain;
        if (x > 730) v -= (x - 730) * .08;
      } else {
        v = quiet + n * lerp([[0, .04], [200, .065], [393, .075]], y);
        if (y === 26 || y === 55 || y === 166) v += .03;
        if (x < 27) v += lerp([[0, .01], [180, .01], [393, .06]], y);
        if (x > 733) {
          const d = x - sweep, width = y > 345 ? 3.4 : 2.5;
          v += lerp([[0, .5], [60, .58], [180, .7], [340, .58], [380, .44], [387, .4], [393, 0]], y) * Math.exp(-d * d / (width * width));
          if (d > 0 && d < 12) v += .06 * (1 - d / 12);
          const f = Math.max(0, 1 - y / 300) * .12;
          const o = 13 - y / 90;
          v += f * Math.exp(-((d + o) ** 2)) + f * Math.exp(-((d + o * 1.42) ** 2));
          if (x > 1000 && y > 364 && y < 367 && x < 1220) v += .04;
          for (const [hx, top, bottom, s, w] of HITS) {
            const e = (x - hx) / w;
            const soft = bottom > 390 ? 20 : 60;
            if (e > 3 || e < -3 || y < top - soft || y > bottom + 30) continue;
            const rise = top === 0 ? 1 : (y - top + soft) / (soft * 2);
            const fall = bottom > 390 ? 1 : (bottom + 30 - y) / 60;
            v += s * Math.max(0, Math.min(1, rise, fall)) * Math.exp(-e * e) * (1 + n * .3) * lerp([[0, 1], [300, 1], [393, .55]], y);
          }
        }
      }
      const c = colour(v), p = (y * W + x) * 4;
      img.data[p] = c[0]; img.data[p + 1] = c[1]; img.data[p + 2] = c[2]; img.data[p + 3] = 255;
    }
  }
  ctx.putImageData(img, 0, 0);
}
document.querySelectorAll('.spec').forEach(drawSpectrogram);

// Overview waveform: two channels round a grey axis
const ov = document.getElementById('overview').getContext('2d');
ov.fillStyle = '#4a5055';
ov.fillRect(0, 12, 1287, 1);
for (const y of [6, 17]) {
  for (let x = 0; x < 1287; x++) {
    let a = .5;
    if (x > 12 && x < 280) a = .7 + rnd() * .8;
    if (x > 310 && x < 407) a = .7 + rnd() * .6;
    if (x > 483 && x < 1000) a = .8 + rnd() * 1.6;
    if (x === 6) a = 4;
    if (x > 495 && x < 515) a = .5;
    const inView = x > 1143;
    if (inView) a = x < 1225 ? 1 : .5;
    if (inView && Math.abs(x - 1232) < 4) a = 3 - Math.abs(x - 1232) / 2;
    if (x === 1247) a = 2;
    ov.fillStyle = inView ? '#2c74d6' : '#1d4682';
    ov.fillRect(x, y + .5 - a, 1, a * 2);
  }
}
```
